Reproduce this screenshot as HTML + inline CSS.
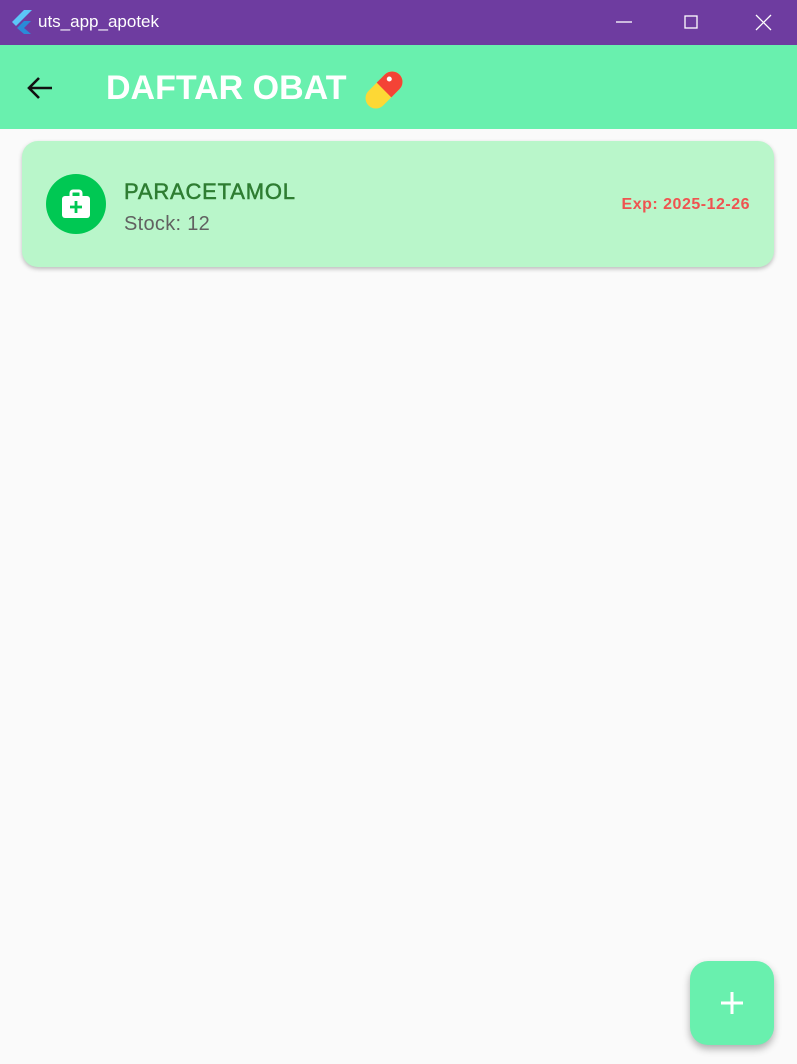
<!DOCTYPE html>
<html><head><style>
*{margin:0;padding:0;box-sizing:border-box}
body{width:797px;height:1064px;background:#fafafa;font-family:"Liberation Sans",sans-serif;position:relative;overflow:hidden}
.tb{height:45px;background:#6e3ca0;color:#fff;position:relative}
.tb .t{position:absolute;left:38px;top:12px;font-size:17px}
.ab{height:84px;background:#69f0ae;position:relative}
.ab h1{position:absolute;left:106px;top:24px;font-size:34px;color:#fff;font-weight:bold;letter-spacing:0}
.card{position:absolute;left:22px;top:141px;width:752px;height:126px;background:#b9f6ca;border-radius:16px;box-shadow:0 2px 4px rgba(0,0,0,.25)}
.circ{position:absolute;left:24px;top:33px;width:60px;height:60px;border-radius:50%;background:#00c853}
.name{position:absolute;left:102px;top:38px;font-size:22px;color:#2e7d32;letter-spacing:.8px;-webkit-text-stroke:0.5px #2e7d32}
.stock{position:absolute;left:102px;top:72px;font-size:20px;color:#616161;letter-spacing:.3px}
.exp{position:absolute;right:24px;top:55px;font-size:16px;color:#ef5350;font-weight:bold;letter-spacing:.5px}
.fab{position:absolute;left:690px;top:961px;width:84px;height:84px;border-radius:18px;background:#69f0ae;box-shadow:0 4px 8px rgba(0,0,0,.3)}
</style></head><body>
<div class="tb">
<svg style="position:absolute;left:12px;top:10px" width="20" height="24" viewBox="0 0 20 24"><path d="M12 0L0 12l4 4L20 0z" fill="#5cc6f8"/><path d="M12 11L5 18l7 6h7l-7-6 7-7z" fill="#2a8bd8"/></svg>
<div class="t">uts_app_apotek</div>
<svg style="position:absolute;left:616px;top:14px" width="160" height="18"><path d="M0 8h16" stroke="#fff" stroke-width="1.3"/><rect x="69" y="2" width="12" height="12" fill="none" stroke="#fff" stroke-width="1.3"/><path d="M140 1l15 15M155 1l-15 15" stroke="#fff" stroke-width="1.3"/></svg>
</div>
<div class="ab">
<svg style="position:absolute;left:26px;top:30px" width="28" height="26" viewBox="0 0 28 26"><path d="M26 13H3M13 3L3 13l10 10" fill="none" stroke="#111" stroke-width="2.6"/></svg>
<h1>DAFTAR OBAT</h1>
<svg style="position:absolute;left:361px;top:22px" width="46" height="46" viewBox="0 0 40 40"><g transform="rotate(-45 20 20)"><rect x="1" y="11" width="38" height="18" rx="9" fill="#fdd835"/><path d="M20 11h10a9 9 0 0 1 0 18H20z" fill="#f44336"/><circle cx="30" cy="16.5" r="2.2" fill="#fff"/></g></svg>
</div>
<div class="card">
<div class="circ"><svg style="position:absolute;left:14px;top:14px" width="32" height="32" viewBox="0 0 32 32"><rect x="2" y="8" width="28" height="22" rx="3" fill="#fff"/><rect x="11" y="3" width="10" height="7" rx="2" fill="none" stroke="#fff" stroke-width="3"/><path d="M16 13v12M10 19h12" stroke="#00c853" stroke-width="2.8"/></svg></div>
<div class="name">PARACETAMOL</div>
<div class="stock">Stock: 12</div>
<div class="exp">Exp: 2025-12-26</div>
</div>
<div class="fab"><svg style="position:absolute;left:30px;top:30px" width="24" height="24"><path d="M12 1v22M1 12h22" stroke="#fff" stroke-width="3"/></svg></div>
</body></html>
